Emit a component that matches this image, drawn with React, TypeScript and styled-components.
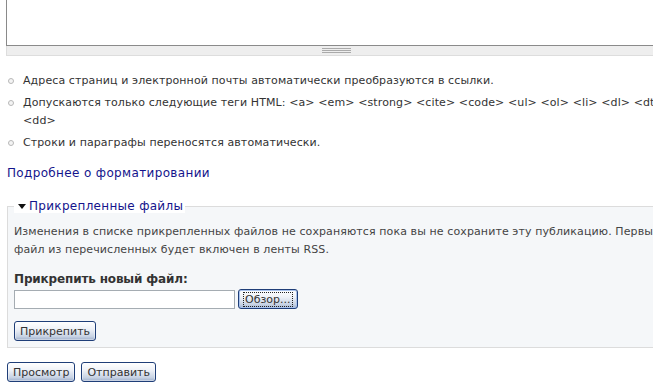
import React from "react";
import styled, { createGlobalStyle } from "styled-components";

const Global = createGlobalStyle`
  html, body { margin: 0; padding: 0; background: #fff; }
  body { font-family: "DejaVu Sans", Verdana, sans-serif; font-size: 11px; color: #333; }
`;

const Viewport = styled.div`
  width: 100%;
  overflow: hidden;
`;

const Page = styled.div`
  width: 675px;
  padding: 0 0 0 7px;
`;

const EditorBox = styled.div`
  width: 700px;
  margin-left: -1px;
`;

const TextArea = styled.div`
  height: 46px;
  border: 1px solid #8a8a8a;
  border-top: none;
  background: #fff;
  box-sizing: border-box;
`;

const Grippie = styled.div`
  height: 10px;
  background: #eee;
  border: 1px solid #ddd;
  border-top: none;
  box-sizing: border-box;
  display: flex;
  padding-left: 315px;
  align-items: center;
`;

const Grip = styled.div`
  width: 29px;
  height: 5px;
  border-top: 1px solid #aaa;
  border-bottom: 1px solid #aaa;
  position: relative;
  box-sizing: border-box;
  &::after {
    content: "";
    position: absolute;
    left: 0;
    right: 0;
    top: 1px;
    border-top: 1px solid #aaa;
  }
`;

const Tips = styled.ul`
  list-style: none;
  margin: 16px 0 0 0;
  padding: 0;
`;

const Tip = styled.li`
  position: relative;
  padding-left: 16px;
  line-height: 18px;
  margin-bottom: 4px;
  letter-spacing: 0.1px;
  color: #333;
  &::before {
    content: "";
    position: absolute;
    left: 1px;
    top: 6px;
    width: 4px;
    height: 4px;
    border: 1px solid #b8b8b8;
    border-radius: 50%;
    background: #f4f4f4;
  }
`;

const MoreLink = styled.a`
  display: block;
  margin-top: 14px;
  font-size: 12px;
  letter-spacing: 0.35px;
  color: #14148c;
  text-decoration: none;
`;

const Fieldset = styled.fieldset`
  margin: 19px 0 0 0;
  padding: 10px 7px 6px 6px;
  border: 1px solid #dcdcdc;
  background: #f5f7f9;
`;

const Legend = styled.legend`
  padding: 0 2px 0 4px;
  font-size: 12px;
  letter-spacing: 0.3px;
  color: #14148c;
  display: flex;
  align-items: center;
  gap: 3px;
  background: #fff;
`;

const Arrow = styled.span`
  width: 0;
  height: 0;
  border-left: 4px solid transparent;
  border-right: 4px solid transparent;
  border-top: 5px solid #111;
`;

const Description = styled.div`
  line-height: 18px;
  letter-spacing: 0.1px;
  color: #444;
`;

const FormItem = styled.div`
  margin-top: 12px;
`;

const Label = styled.label`
  display: block;
  font-size: 12px;
  font-weight: bold;
  letter-spacing: -0.15px;
  color: #333;
  line-height: 16px;
`;

const FileRow = styled.div`
  display: flex;
  align-items: center;
  gap: 3px;
  margin-top: 2px;
`;

const FileInput = styled.input`
  width: 221px;
  height: 19px;
  box-sizing: border-box;
  border: 1px solid #a5acb2;
  margin: 0;
  padding: 0 2px;
  background: #fff;
`;

const Button = styled.button<{ $focused?: boolean }>`
  font-family: "DejaVu Sans", Verdana, sans-serif;
  font-size: 11px;
  color: #333;
  height: 20px;
  padding: 0 5px;
  margin: 0;
  border: 1px solid #1f3e78;
  border-radius: 3px;
  background: linear-gradient(to bottom, #ffffff 0%, #eef1f7 40%, #c8d3e4 80%, #9fb0cc 100%);
  box-shadow: inset 0 0 0 1px ${(p) => (p.$focused ? "#a9c3ee" : "rgba(255,255,255,0.4)")};
  cursor: pointer;
`;

const FocusText = styled.span`
  outline: 1px dotted #222;
  padding: 0 1px;
`;

const AttachRow = styled.div`
  margin-top: 12px;
`;

const Actions = styled.div`
  display: flex;
  gap: 6px;
  margin-top: 14px;
`;

export default function App() {
  return (
    <>
      <Global />
      <Viewport>
        <Page>
          <EditorBox>
            <TextArea />
            <Grippie>
              <Grip />
            </Grippie>
          </EditorBox>
          <Tips>
            <Tip>Адреса страниц и электронной почты автоматически преобразуются в ссылки.</Tip>
            <Tip>
              Допускаются только следующие теги HTML: &lt;a&gt; &lt;em&gt; &lt;strong&gt; &lt;cite&gt; &lt;code&gt;
              &lt;ul&gt; &lt;ol&gt; &lt;li&gt; &lt;dl&gt; &lt;dt&gt; &lt;dd&gt;
            </Tip>
            <Tip>Строки и параграфы переносятся автоматически.</Tip>
          </Tips>
          <MoreLink href="#">Подробнее о форматировании</MoreLink>
          <Fieldset>
            <Legend>
              <Arrow />
              Прикрепленные файлы
            </Legend>
            <Description>
              Изменения в списке прикрепленных файлов не сохраняются пока вы не сохраните эту публикацию. Первый
              файл из перечисленных будет включен в ленты RSS.
            </Description>
            <FormItem>
              <Label>Прикрепить новый файл:</Label>
              <FileRow>
                <FileInput type="text" readOnly />
                <Button $focused>
                  <FocusText>Обзор...</FocusText>
                </Button>
              </FileRow>
            </FormItem>
            <AttachRow>
              <Button>Прикрепить</Button>
            </AttachRow>
          </Fieldset>
          <Actions>
            <Button>Просмотр</Button>
            <Button>Отправить</Button>
          </Actions>
        </Page>
      </Viewport>
    </>
  );
}
